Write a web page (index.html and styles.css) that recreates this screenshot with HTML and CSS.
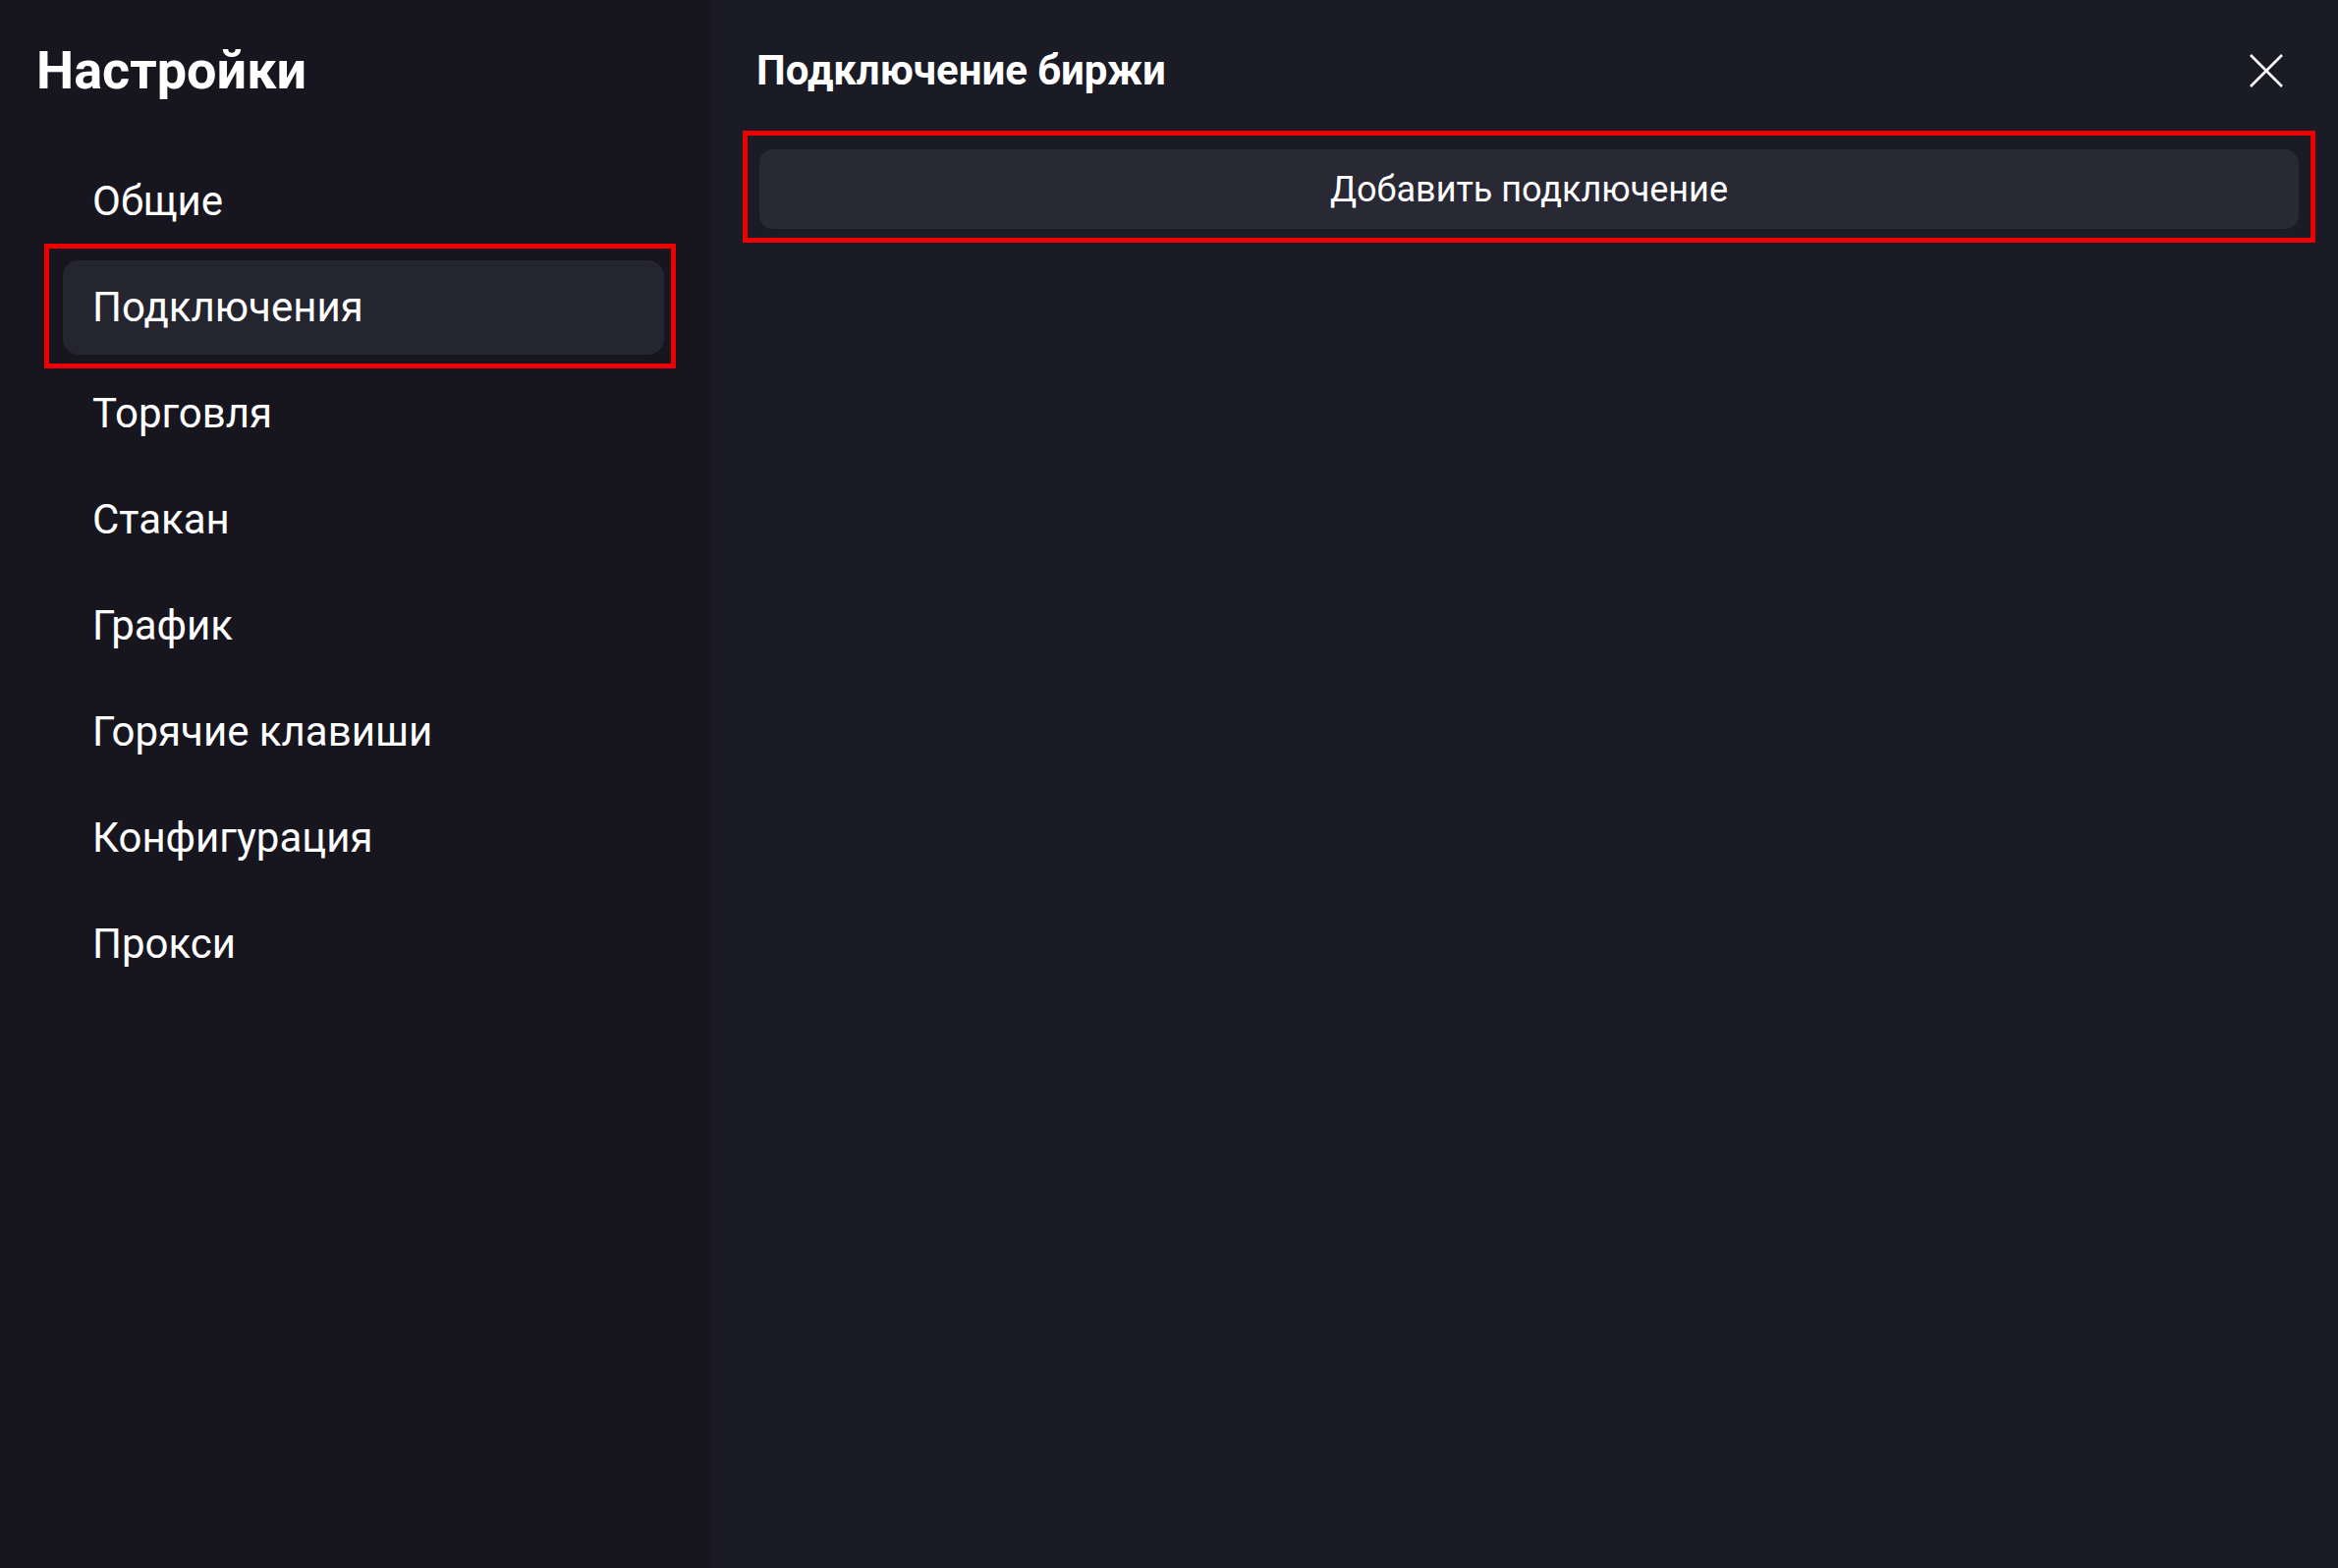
FILE: index.html
```html
<!DOCTYPE html>
<html lang="ru">
<head>
  <meta charset="utf-8">
  <title>Настройки</title>
  <link rel="stylesheet" href="styles.css">
</head>
<body>

  <div class="sidebar">
    <div class="sidebar-title">Настройки</div>
    <div class="menu">
      <div class="menu-item">Общие</div>
      <div class="menu-item active marked">Подключения</div>
      <div class="menu-item">Торговля</div>
      <div class="menu-item">Стакан</div>
      <div class="menu-item">График</div>
      <div class="menu-item">Горячие клавиши</div>
      <div class="menu-item">Конфигурация</div>
      <div class="menu-item">Прокси</div>
    </div>
  </div>

  <div class="content">
    <div class="content-header">
      <div class="content-title">Подключение биржи</div>
      <button class="close-button">
        <svg width="34" height="34" viewBox="0 0 34 34">
          <path d="M1 1 L33 33 M33 1 L1 33" stroke="#ffffff" stroke-width="2.6" fill="none"/>
        </svg>
      </button>
    </div>
    <button class="add-button marked-wide">Добавить подключение</button>
  </div>

</body>
</html>
```

FILE: styles.css
```css
html, body {
  margin: 0;
  padding: 0;
  height: 100%;
  width: 100%;
  font-family: Roboto, 'Noto Sans', sans-serif;
  background-color: #1b1b26;
  color: #ffffff;
  overflow: hidden;
}

body {
  display: flex;
}

.sidebar {
  width: 724px;
  flex-shrink: 0;
  height: 100%;
  background: #17161f;
  padding: 40px 0 0 37px;
  box-sizing: border-box;
}

.sidebar-title {
  font-size: 54px;
  font-weight: bold;
  line-height: 64px;
}

.menu {
  display: flex;
  flex-direction: column;
  gap: 12px;
  margin-top: 53px;
  margin-left: 27px;
  width: 612px;
}

.menu-item {
  position: relative;
  height: 96px;
  line-height: 96px;
  padding-left: 30px;
  font-size: 42px;
  border-radius: 16px;
}

.menu-item.active {
  background: #252530;
}

.marked::after {
  content: "";
  position: absolute;
  top: -17px;
  left: -19px;
  right: -12px;
  bottom: -14px;
  border: 5px solid #ee0000;
}

.content {
  flex: 1;
  padding: 48px 40px 0 46px;
  display: flex;
  flex-direction: column;
}

.content-header {
  display: flex;
  align-items: center;
  justify-content: space-between;
  height: 48px;
}

.content-title {
  font-size: 42px;
  font-weight: bold;
  line-height: 48px;
}

.close-button {
  background: none;
  border: none;
  padding: 0;
  margin-right: 16px;
  width: 34px;
  height: 34px;
  display: flex;
}

.add-button {
  position: relative;
  margin-top: 56px;
  margin-left: 3px;
  height: 81px;
  background: #292935;
  border: none;
  border-radius: 14px;
  color: #ffffff;
  font-family: Roboto, 'Noto Sans', sans-serif;
  font-size: 36px;
}

.marked-wide::after {
  content: "";
  position: absolute;
  top: -19px;
  left: -17px;
  right: -17px;
  bottom: -14px;
  border: 5px solid #ee0000;
}
```
